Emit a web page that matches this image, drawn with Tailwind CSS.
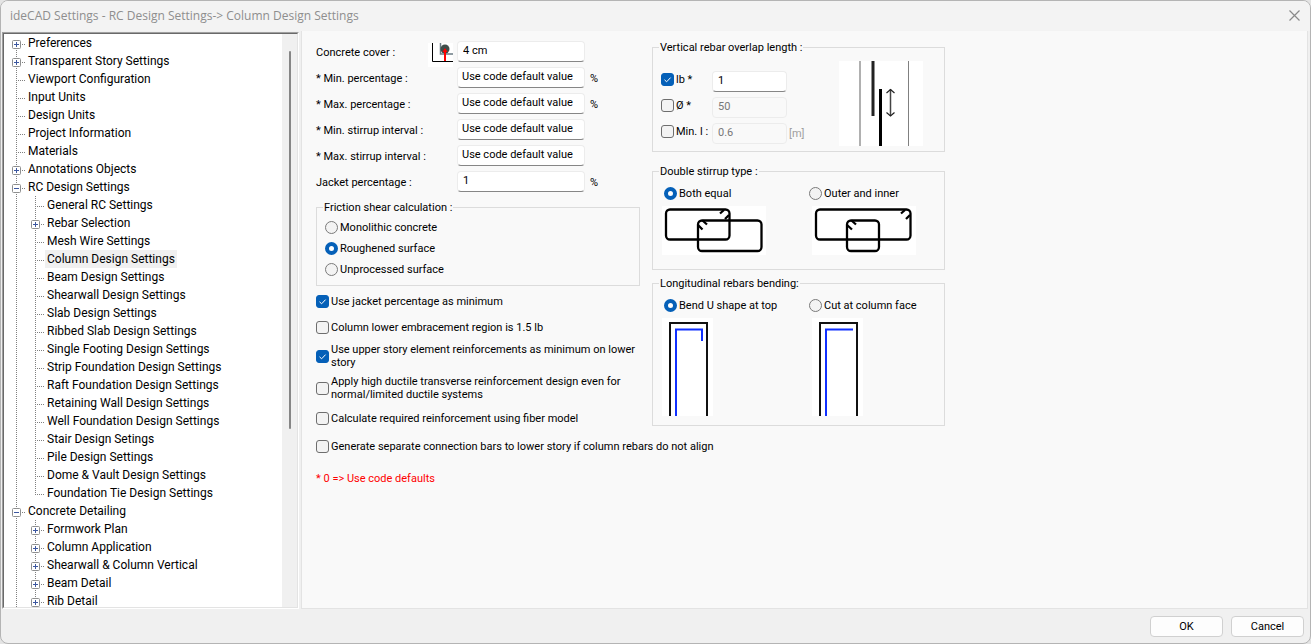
<!DOCTYPE html>
<html lang="en">
<head>
    <meta charset="UTF-8">
    <meta name="viewport" content="width=device-width, initial-scale=1.0">
    <title>ideCAD Settings</title>
    <script src="https://cdn.jsdelivr.net/npm/@tailwindcss/browser@4"></script>
</head>
<body class="bg-[#e4e4e4] text-black">

    <!-- Tree and tick glyphs -->
    <svg class="hidden">
        <defs>
            <linearGradient id="boxFill" x1="0" y1="0" x2="0" y2="1">
                <stop offset="0" stop-color="#ffffff"/>
                <stop offset="1" stop-color="#e4e4e4"/>
            </linearGradient>
        </defs>
        <symbol id="line" viewBox="0 0 22 18"><path d="M12.5 0V18" stroke="#808080" stroke-dasharray="1 1" shape-rendering="crispEdges"/></symbol>
        <symbol id="tee" viewBox="0 0 22 18"><path d="M12.5 0V18M12 10.5H22" stroke="#808080" stroke-dasharray="1 1" shape-rendering="crispEdges"/></symbol>
        <symbol id="end" viewBox="0 0 22 18"><path d="M12.5 0V10M12 10.5H22" stroke="#808080" stroke-dasharray="1 1" shape-rendering="crispEdges"/></symbol>
        <symbol id="box" viewBox="0 0 22 18">
            <path d="M18 10.5H22" stroke="#808080" stroke-dasharray="1 1" shape-rendering="crispEdges"/>
            <rect x="8.5" y="6.5" width="8" height="8" rx="1" fill="url(#boxFill)" stroke="#8e8f8f"/>
            <path d="M10 10.5H15" stroke="#3c57a0" shape-rendering="crispEdges"/>
        </symbol>
        <symbol id="plus" viewBox="0 0 22 18">
            <path d="M12.5 0V6M12.5 16V18" stroke="#808080" stroke-dasharray="1 1" shape-rendering="crispEdges"/>
            <use href="#box"/>
            <path d="M12.5 8V13" stroke="#3c57a0" shape-rendering="crispEdges"/>
        </symbol>
        <symbol id="first" viewBox="0 0 22 18">
            <path d="M12.5 16V18" stroke="#808080" stroke-dasharray="1 1" shape-rendering="crispEdges"/>
            <use href="#box"/>
            <path d="M12.5 8V13" stroke="#3c57a0" shape-rendering="crispEdges"/>
        </symbol>
        <symbol id="minus" viewBox="0 0 22 18">
            <path d="M12.5 0V6M12.5 16V18" stroke="#808080" stroke-dasharray="1 1" shape-rendering="crispEdges"/>
            <use href="#box"/>
        </symbol>
        <symbol id="tick" viewBox="0 0 13 13"><path d="M3.5 6.8L5.6 8.8L9.6 4.6" fill="none" stroke="#fff"/></symbol>
    </svg>

    <div class="h-screen flex flex-col bg-[#f0f0f0] border border-[#b4b4b4] rounded-lg overflow-hidden">
        <header class="h-[30px] shrink-0 flex items-center justify-between bg-[#f3f3f3] pl-[9px] pr-2">
            <h1 class="font-['Open_Sans',sans-serif] text-[12px] text-[#8e8e8e]">ideCAD Settings - RC Design Settings-&gt; Column Design Settings</h1>
            <button type="button" aria-label="Close" class="p-0.5 pb-1">
                <svg class="w-[11px] h-[11px]" viewBox="0 0 11 11"><path d="M.5 .5L10.5 10.5M10.5 .5L.5 10.5" stroke="#8a8a8a" stroke-width="1.2"/></svg>
            </button>
        </header>

        <div class="flex-1 min-h-0 flex pl-px">
            <!-- Navigation tree -->
            <nav class="w-[297px] shrink-0 mt-px flex border-t border-l border-[#a0a0a0] border-r border-r-white border-b border-b-white">
                <div class="flex-1 min-w-0 flex bg-white border-t border-l border-[#696969] border-r border-r-[#e3e3e3] border-b border-b-[#e3e3e3]">
                    <ul id="tree" class="flex-1 overflow-hidden font-['Roboto',sans-serif] text-[12px] leading-[18px] whitespace-nowrap"></ul>
                    <div class="w-[15px] bg-[#f0f0f0] flex justify-center pt-[17px]">
                        <div class="w-0.5 h-[68%] bg-[#868686] rounded"></div>
                    </div>
                </div>
            </nav>

            <!-- Column design settings -->
            <main class="flex-1 ml-0.5 mr-0.5 bg-[#f9f9f9] border border-t-0 border-[#e3e3e3] overflow-hidden font-['Roboto',sans-serif] text-[11px] leading-[13px]">
                <form class="flex items-start gap-3 pt-2.5 pl-3.5">
                    <div class="w-[324px] shrink-0">
                        <div class="h-[26px] flex items-start">
                            <label for="cover" class="w-28 pt-[5px]">Concrete cover :</label>
                            <svg class="w-[25px] h-6 mt-0.5 mr-1" viewBox="0 0 25 24">
                                <rect width="25" height="24" fill="#fff"/>
                                <path d="M4.5 0V18.5H25" fill="none" stroke="#000"/>
                                <path d="M12.5 0V11H25" fill="none" stroke="#6b7b84" stroke-width="1.5"/>
                                <circle cx="17" cy="6" r="4.5" fill="#3f4d49"/>
                                <path d="M17 6V18" stroke="#f00" stroke-width="2"/>
                                <path d="M14.5 9L17 5L19.5 9Z" fill="#f00"/>
                            </svg>
                            <input id="cover" type="text" value="4 cm" class="w-32 h-[21px] px-[5px] pb-0.5 bg-white border border-[#ececec] border-b-[#868686] rounded-sm">
                        </div>
                        <div class="h-[26px] flex items-start">
                            <label for="minPct" class="w-[141px] pt-[5px]">* Min. percentage :</label>
                            <input id="minPct" type="text" value="Use code default value" class="w-32 h-[21px] px-1 pb-0.5 bg-white border border-[#ececec] border-b-[#868686] rounded-sm">
                            <span class="pt-[5px] pl-[5px]">%</span>
                        </div>
                        <div class="h-[26px] flex items-start">
                            <label for="maxPct" class="w-[141px] pt-[5px]">* Max. percentage :</label>
                            <input id="maxPct" type="text" value="Use code default value" class="w-32 h-[21px] px-1 pb-0.5 bg-white border border-[#ececec] border-b-[#868686] rounded-sm">
                            <span class="pt-[5px] pl-[5px]">%</span>
                        </div>
                        <div class="h-[26px] flex items-start">
                            <label for="minStirrup" class="w-[141px] pt-[5px]">* Min. stirrup interval :</label>
                            <input id="minStirrup" type="text" value="Use code default value" class="w-32 h-[21px] px-1 pb-0.5 bg-white border border-[#ececec] border-b-[#868686] rounded-sm">
                        </div>
                        <div class="h-[26px] flex items-start">
                            <label for="maxStirrup" class="w-[141px] pt-[5px]">* Max. stirrup interval :</label>
                            <input id="maxStirrup" type="text" value="Use code default value" class="w-32 h-[21px] px-1 pb-0.5 bg-white border border-[#ececec] border-b-[#868686] rounded-sm">
                        </div>
                        <div class="h-[26px] flex items-start">
                            <label for="jacket" class="w-[141px] pt-[5px]">Jacket percentage :</label>
                            <input id="jacket" type="text" value="1" class="w-32 h-[21px] px-[5px] pb-0.5 bg-white border border-[#ececec] border-b-[#868686] rounded-sm">
                            <span class="pt-[5px] pl-[5px]">%</span>
                        </div>

                        <fieldset class="mt-1 border border-[#dcdcdc] pt-[3px] pb-[5px] pl-2">
                            <legend class="ml-[-2px] px-px">Friction shear calculation :</legend>
                            <label class="h-[21px] flex items-center gap-0.5">
                                <input type="radio" name="friction" class="appearance-none size-[13px] shrink-0 rounded-full border border-[#7a7a7a] bg-[#f3f3f3] checked:border-4 checked:border-[#0560b8] checked:bg-white">
                                Monolithic concrete
                            </label>
                            <label class="h-[21px] flex items-center gap-0.5">
                                <input type="radio" name="friction" checked class="appearance-none size-[13px] shrink-0 rounded-full border border-[#7a7a7a] bg-[#f3f3f3] checked:border-4 checked:border-[#0560b8] checked:bg-white">
                                Roughened surface
                            </label>
                            <label class="h-[21px] flex items-center gap-0.5">
                                <input type="radio" name="friction" class="appearance-none size-[13px] shrink-0 rounded-full border border-[#7a7a7a] bg-[#f3f3f3] checked:border-4 checked:border-[#0560b8] checked:bg-white">
                                Unprocessed surface
                            </label>
                        </fieldset>

                        <div class="mt-0.5 whitespace-nowrap">
                            <label class="h-[26px] flex items-center gap-0.5">
                                <span class="grid"><input type="checkbox" checked class="peer col-start-1 row-start-1 appearance-none size-[13px] rounded-[3px] border border-[#6e6e6e] bg-[#f3f3f3] checked:border-[#0560b8] checked:bg-[#0560b8]"><svg class="col-start-1 row-start-1 size-[13px] hidden peer-checked:block pointer-events-none"><use href="#tick"/></svg></span>
                                Use jacket percentage as minimum
                            </label>
                            <label class="h-[26px] flex items-center gap-0.5">
                                <input type="checkbox" class="appearance-none size-[13px] shrink-0 rounded-[3px] border border-[#6e6e6e] bg-[#f3f3f3] checked:bg-[#0560b8]">
                                Column lower embracement region is 1.5 lb
                            </label>
                            <label class="h-8 flex items-center gap-0.5">
                                <span class="grid"><input type="checkbox" checked class="peer col-start-1 row-start-1 appearance-none size-[13px] rounded-[3px] border border-[#6e6e6e] bg-[#f3f3f3] checked:border-[#0560b8] checked:bg-[#0560b8]"><svg class="col-start-1 row-start-1 size-[13px] hidden peer-checked:block pointer-events-none"><use href="#tick"/></svg></span>
                                <span>Use upper story element reinforcements as minimum on lower<br>story</span>
                            </label>
                            <label class="h-8 flex items-center gap-0.5">
                                <input type="checkbox" class="appearance-none size-[13px] shrink-0 rounded-[3px] border border-[#6e6e6e] bg-[#f3f3f3] checked:bg-[#0560b8]">
                                <span>Apply high ductile transverse reinforcement design even for<br>normal/limited ductile systems</span>
                            </label>
                            <label class="h-7 flex items-center gap-0.5">
                                <input type="checkbox" class="appearance-none size-[13px] shrink-0 rounded-[3px] border border-[#6e6e6e] bg-[#f3f3f3] checked:bg-[#0560b8]">
                                Calculate required reinforcement using fiber model
                            </label>
                            <label class="h-7 flex items-center gap-0.5">
                                <input type="checkbox" class="appearance-none size-[13px] shrink-0 rounded-[3px] border border-[#6e6e6e] bg-[#f3f3f3] checked:bg-[#0560b8]">
                                Generate separate connection bars to lower story if column rebars do not align
                            </label>
                            <p class="h-9 flex items-center text-[#ff0000]">* 0 =&gt; Use code defaults</p>
                        </div>
                    </div>

                    <div class="w-[293px] shrink-0">
                        <fieldset class="border border-[#dcdcdc] pl-2 pr-[21px] pb-0.5">
                            <legend class="ml-[-2px] px-px">Vertical rebar overlap length :</legend>
                            <div class="flex justify-between">
                                <div class="pt-[17px]">
                                    <div class="h-[26px] flex items-start">
                                        <label class="w-[51px] pt-0.5 flex items-center gap-0.5 whitespace-nowrap">
                                            <span class="grid"><input type="checkbox" checked class="peer col-start-1 row-start-1 appearance-none size-[13px] rounded-[3px] border border-[#6e6e6e] bg-[#f3f3f3] checked:border-[#0560b8] checked:bg-[#0560b8]"><svg class="col-start-1 row-start-1 size-[13px] hidden peer-checked:block pointer-events-none"><use href="#tick"/></svg></span>
                                            lb *
                                        </label>
                                        <input type="text" aria-label="lb" value="1" class="w-[75px] h-[21px] px-[5px] pb-0.5 bg-white border border-[#ececec] border-b-[#868686] rounded-sm">
                                    </div>
                                    <div class="h-[26px] flex items-start">
                                        <label class="w-[51px] pt-0.5 flex items-center gap-0.5 whitespace-nowrap">
                                            <input type="checkbox" class="appearance-none size-[13px] shrink-0 rounded-[3px] border border-[#6e6e6e] bg-[#f3f3f3] checked:bg-[#0560b8]">
                                            Ø *
                                        </label>
                                        <input type="text" aria-label="Diameter" value="50" disabled class="w-[75px] h-[21px] px-[5px] pb-0.5 bg-[#f9f9f9] border border-[#ececec] rounded-sm text-[#787878]">
                                    </div>
                                    <div class="h-[26px] flex items-start">
                                        <label class="w-[51px] pt-0.5 flex items-center gap-0.5 whitespace-nowrap">
                                            <input type="checkbox" class="appearance-none size-[13px] shrink-0 rounded-[3px] border border-[#6e6e6e] bg-[#f3f3f3] checked:bg-[#0560b8]">
                                            Min. l :
                                        </label>
                                        <input type="text" aria-label="Min. l" value="0.6" disabled class="w-[75px] h-[21px] px-[5px] pb-0.5 bg-[#f9f9f9] border border-[#ececec] rounded-sm text-[#787878]">
                                        <span class="pt-1 pl-0.5 text-[#a0a0a0]">[m]</span>
                                    </div>
                                </div>
                                <svg class="w-[84px] h-[85px] mt-[7px]" viewBox="0 0 84 85">
                                    <rect width="84" height="85" fill="#fff"/>
                                    <path d="M21 0V85" stroke="#b0b0b0" stroke-width="2"/>
                                    <path d="M69.5 0V85" stroke="#808080"/>
                                    <path d="M34 0V55" stroke="#222" stroke-width="3"/>
                                    <path d="M41.5 28V85" stroke="#000" stroke-width="3"/>
                                    <path d="M51.5 28V55" stroke="#444" stroke-width="1.5"/>
                                    <path d="M47.5 32L51.5 28.5L55.5 32M47.5 51.5L51.5 55L55.5 51.5" fill="none" stroke="#222" stroke-width="1.2"/>
                                </svg>
                            </div>
                        </fieldset>

                        <fieldset class="mt-[13px] border border-[#dcdcdc] pt-1.5 pb-3.5 pl-[9px] flex">
                            <legend class="ml-[-3px] px-px">Double stirrup type :</legend>
                            <div class="w-[147px]">
                                <label class="h-[19px] ml-0.5 flex items-center gap-0.5">
                                    <input type="radio" name="stirrup" checked class="appearance-none size-[13px] shrink-0 rounded-full border border-[#7a7a7a] bg-[#f3f3f3] checked:border-4 checked:border-[#0560b8] checked:bg-white">
                                    Both equal
                                </label>
                                <svg class="w-[104px] h-[49px] mt-[3px]" viewBox="0 0 104 49">
                                    <rect width="104" height="49" fill="#fff"/>
                                    <g fill="none" stroke="#000" stroke-width="2.3">
                                        <rect x="4" y="3.5" width="63.5" height="30" rx="4"/>
                                        <rect x="36" y="14.5" width="63.5" height="30.5" rx="4"/>
                                        <path d="M62 4L58 7.5M67 9L63 13M40.5 14.5L45 18.5M36 19L40.5 23.5"/>
                                    </g>
                                </svg>
                            </div>
                            <div>
                                <label class="h-[19px] flex items-center gap-0.5">
                                    <input type="radio" name="stirrup" class="appearance-none size-[13px] shrink-0 rounded-full border border-[#7a7a7a] bg-[#f3f3f3] checked:border-4 checked:border-[#0560b8] checked:bg-white">
                                    Outer and inner
                                </label>
                                <svg class="w-[104px] h-[49px] mt-[3px] ml-[3px]" viewBox="0 0 104 49">
                                    <rect width="104" height="49" fill="#fff"/>
                                    <g fill="none" stroke="#000" stroke-width="2.3">
                                        <rect x="4" y="3.5" width="94.5" height="30" rx="4"/>
                                        <rect x="35" y="14.5" width="32" height="30.5" rx="4"/>
                                        <path d="M93 4L89 7.5M98 9L94 13M39.5 14.5L44 18.5M35 19L40 23.5"/>
                                    </g>
                                </svg>
                            </div>
                        </fieldset>

                        <fieldset class="mt-[7px] border border-[#dcdcdc] pt-1.5 pb-[9px] pl-[9px] flex">
                            <legend class="ml-[-3px] px-px">Longitudinal rebars bending:</legend>
                            <div class="w-[147px]">
                                <label class="h-[19px] ml-0.5 flex items-center gap-0.5">
                                    <input type="radio" name="bending" checked class="appearance-none size-[13px] shrink-0 rounded-full border border-[#7a7a7a] bg-[#f3f3f3] checked:border-4 checked:border-[#0560b8] checked:bg-white">
                                    Bend U shape at top
                                </label>
                                <svg class="w-[51px] h-[98px] mt-[3px]" viewBox="0 0 51 98">
                                    <rect width="51" height="98" fill="#fff"/>
                                    <path d="M8 98V5H45V98" fill="none" stroke="#111" stroke-width="2"/>
                                    <path d="M14 98V11.5H40V23" fill="none" stroke="#1030ff" stroke-width="2"/>
                                </svg>
                            </div>
                            <div>
                                <label class="h-[19px] flex items-center gap-0.5">
                                    <input type="radio" name="bending" class="appearance-none size-[13px] shrink-0 rounded-full border border-[#7a7a7a] bg-[#f3f3f3] checked:border-4 checked:border-[#0560b8] checked:bg-white">
                                    Cut at column face
                                </label>
                                <svg class="w-[51px] h-[98px] mt-[3px] ml-[3px]" viewBox="0 0 51 98">
                                    <rect width="51" height="98" fill="#fff"/>
                                    <path d="M8 98V5H45V98" fill="none" stroke="#111" stroke-width="2"/>
                                    <path d="M14 98V11.5H41" fill="none" stroke="#1030ff" stroke-width="2"/>
                                </svg>
                            </div>
                        </fieldset>
                    </div>
                </form>
            </main>
        </div>

        <footer class="h-[34px] shrink-0 flex items-center justify-end gap-2 pr-1.5 font-['Roboto',sans-serif] text-[11px] leading-[13px]">
            <button type="button" class="w-[73px] h-[21px] bg-[#fdfdfd] border border-[#d0d0d0] rounded">OK</button>
            <button type="button" class="w-[73px] h-[21px] bg-[#fdfdfd] border border-[#d0d0d0] rounded">Cancel</button>
        </footer>
    </div>

    <script>
        // [glyph, label, depth]
        const items = [
            ['first', 'Preferences', 0],
            ['plus', 'Transparent Story Settings', 0],
            ['tee', 'Viewport Configuration', 0],
            ['tee', 'Input Units', 0],
            ['tee', 'Design Units', 0],
            ['tee', 'Project Information', 0],
            ['tee', 'Materials', 0],
            ['plus', 'Annotations Objects', 0],
            ['minus', 'RC Design Settings', 0],
            ['tee', 'General RC Settings', 1],
            ['plus', 'Rebar Selection', 1],
            ['tee', 'Mesh Wire Settings', 1],
            ['tee', 'Column Design Settings', 1],
            ['tee', 'Beam Design Settings', 1],
            ['tee', 'Shearwall Design Settings', 1],
            ['tee', 'Slab Design Settings', 1],
            ['tee', 'Ribbed Slab Design Settings', 1],
            ['tee', 'Single Footing Design Settings', 1],
            ['tee', 'Strip Foundation Design Settings', 1],
            ['tee', 'Raft Foundation Design Settings', 1],
            ['tee', 'Retaining Wall Design Settings', 1],
            ['tee', 'Well Foundation Design Settings', 1],
            ['tee', 'Stair Design Setings', 1],
            ['tee', 'Pile Design Settings', 1],
            ['tee', 'Dome &amp; Vault Design Settings', 1],
            ['end', 'Foundation Tie Design Settings', 1],
            ['minus', 'Concrete Detailing', 0],
            ['plus', 'Formwork Plan', 1],
            ['plus', 'Column Application', 1],
            ['plus', 'Shearwall &amp; Column Vertical', 1],
            ['plus', 'Beam Detail', 1],
            ['plus', 'Rib Detail', 1]
        ];
        const selected = 'Column Design Settings';

        document.getElementById('tree').innerHTML = items.map(([glyph, label, depth]) => `
            <li class="flex h-[18px]">
                ${depth ? '<svg class="w-[22px] h-[18px] -mr-[3px] shrink-0"><use href="#line"/></svg>' : ''}
                <svg class="w-[22px] h-[18px] shrink-0"><use href="#${glyph}"/></svg>
                <a href="#" class="${label === selected ? 'px-0.5 bg-[#f0f0f0]' : 'px-0.5'}">${label}</a>
            </li>`).join('');
    </script>
</body>
</html>
